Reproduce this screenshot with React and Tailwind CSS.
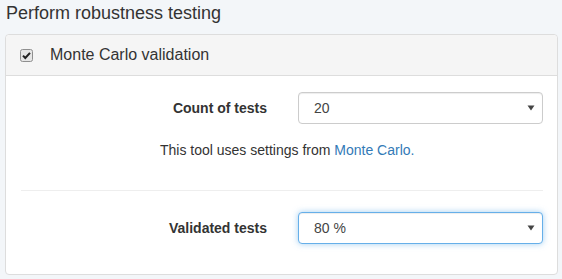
import React from 'react';

const Caret = () => (
  <svg width="8" height="6" viewBox="0 0 8 6" className="shrink-0">
    <path d="M0.5 0.5 L7.5 0.5 L4 5.5 Z" fill="#444" />
  </svg>
);

const FakeSelect = ({ value, focused }) => (
  <div
    className={
      focused
        ? 'shrink-0 ml-[31px] w-[245px] h-[32px] flex items-center justify-between pl-[15px] pr-[7px] bg-white rounded-[4px] border border-[#66afe9] shadow-[inset_0_1px_1px_rgba(0,0,0,0.075),0_0_6px_rgba(102,175,233,0.6)] text-[14px] text-[#444]'
        : 'shrink-0 ml-[31px] w-[245px] h-[32px] flex items-center justify-between pl-[15px] pr-[7px] bg-white rounded-[4px] border border-[#ccc] shadow-[inset_0_1px_1px_rgba(0,0,0,0.075)] text-[14px] text-[#444]'
    }
  >
    <span>{value}</span>
    <Caret />
  </div>
);

const App = () => {
  return (
    <div className="w-[562px] h-[279px] overflow-hidden bg-[#f3f6f9] text-[#333] font-['Liberation_Sans',Arial,sans-serif]">
      <h4 className="pl-[6px] pt-[2px] text-[18px] leading-[22px]">Perform robustness testing</h4>

      <div className="mt-[10px] ml-[5px] w-[553px] bg-white border border-[#ddd] rounded-[4px]">
        <div className="h-[41px] flex items-center pl-[14px] bg-[#f5f5f5] border-b border-[#ddd] rounded-t-[4px]">
          <svg width="13" height="13" viewBox="0 0 13 13" className="shrink-0">
            <rect x="0.5" y="0.5" width="12" height="12" rx="2" fill="#e6e6e6" stroke="#8f8f8f" />
            <path d="M3 6.6 L5.3 9 L10 3.8" fill="none" stroke="#222" strokeWidth="2" />
          </svg>
          <span className="ml-[17px] text-[16px]">Monte Carlo validation</span>
        </div>

        <div className="px-[15px] pt-[16px] pb-[30px]">
          <div className="flex items-center">
            <label className="shrink-0 w-[246px] text-right font-bold text-[14px]">Count of tests</label>
            <FakeSelect value="20" />
          </div>

          <p className="mt-[16px] pl-[139px] text-[14px] leading-[20px]">
            This tool uses settings from <a className="text-[#337ab7]">Monte Carlo.</a>
          </p>

          <hr className="mt-[30px] w-[522px] border-t border-[#eee]" />

          <div className="mt-[21px] flex items-center">
            <label className="shrink-0 w-[246px] text-right font-bold text-[14px]">Validated tests</label>
            <FakeSelect value="80 %" focused />
          </div>
        </div>
      </div>
    </div>
  );
};

export default App;
